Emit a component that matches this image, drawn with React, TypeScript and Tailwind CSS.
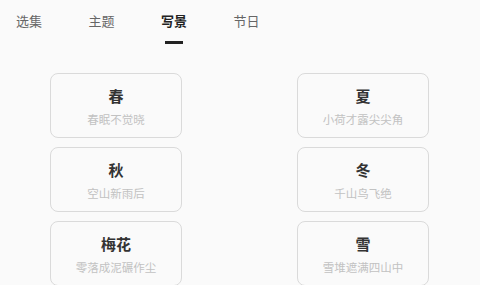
import React from "react";

const tabs = ["选集", "主题", "写景", "节日"];
const cards = [
  ["春", "春眠不觉晓"],
  ["夏", "小荷才露尖尖角"],
  ["秋", "空山新雨后"],
  ["冬", "千山鸟飞绝"],
  ["梅花", "零落成泥碾作尘"],
  ["雪", "雪堆遮满四山中"],
];

export default function App() {
  return (
    <div
      className="w-[480px] h-[285px] overflow-hidden bg-[#fafafa]"
      style={{ fontFamily: '"Noto Sans CJK SC", "Noto Sans", sans-serif' }}
    >
      <div className="flex pl-4 gap-[46.5px] pt-[13px] h-[73px]">
        {tabs.map((t, i) => (
          <div key={t} className="flex flex-col items-center">
            <span
              className={
                "text-[13px] leading-[16px] " +
                (i === 2 ? "text-[#222222] font-bold" : "text-[#666666]")
              }
            >
              {t}
            </span>
            {i === 2 && <div className="mt-[12px] w-[18px] h-[3px] bg-[#222222]" />}
          </div>
        ))}
      </div>
      <div className="grid grid-cols-[132px_132px] justify-between gap-y-[9px] pl-[50px] pr-[51px]">
        {cards.map(([title, sub]) => (
          <div
            key={title}
            className="h-[65px] rounded-[8px] border border-[#dadada] flex flex-col items-center pt-[12px]"
          >
            <span className="text-[15px] leading-[20px] font-bold text-[#333333]">{title}</span>
            <span className="mt-[5px] text-[11.5px] leading-[17px] text-[#c2c2c2]">{sub}</span>
          </div>
        ))}
      </div>
    </div>
  );
}
